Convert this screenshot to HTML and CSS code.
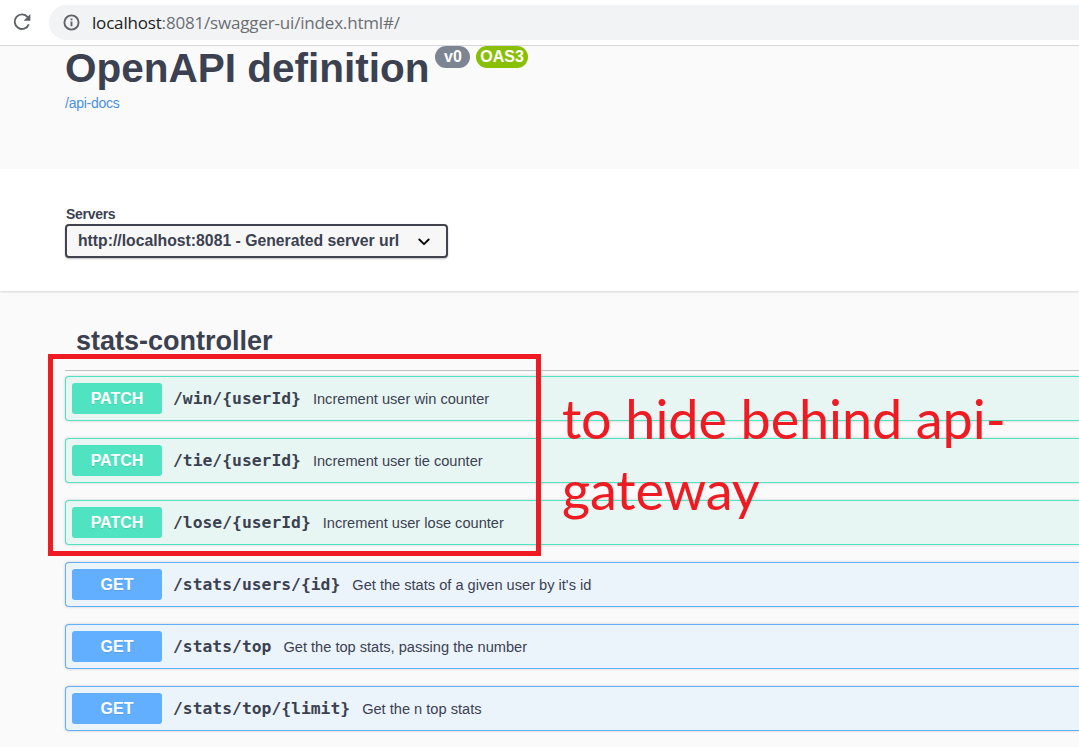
FILE: index.html
```html
<!DOCTYPE html>
<html lang="en">
<head>
<meta charset="utf-8">
<title>OpenAPI definition</title>
<link rel="stylesheet" href="styles.css">
</head>
<body>
<header class="toolbar">
  <svg class="reload" viewBox="0 0 20 20"><path d="M15.7 5.1A7.3 7.3 0 1 0 16.8 12.3" fill="none" stroke="#5f6368" stroke-width="1.9"/><path d="M18.4 2v6.8h-6.8z" fill="#5f6368"/></svg>
  <div class="address">
    <svg class="info-icon" viewBox="0 0 18 18"><circle cx="9" cy="9" r="7.5" fill="none" stroke="#5f6368" stroke-width="2"/><path d="M9 8v5M9 4.8v1.8" stroke="#5f6368" stroke-width="2"/></svg>
    <span class="url"><b>localhost</b>:8081/swagger-ui/index.html#/</span>
  </div>
</header>
<section class="intro">
  <div class="title-row"><h1>OpenAPI definition</h1><span class="badge">v0</span><span class="badge oas">OAS3</span></div>
  <a class="docs">/api-docs</a>
</section>
<section class="servers">
  <label>Servers</label>
  <div class="select"><span>http://localhost:8081 - Generated server url</span><svg viewBox="0 0 12 8"><path d="M1.3 1.5 6 6.2l4.7-4.7" fill="none" stroke="#000" stroke-width="1.8" stroke-linecap="round" stroke-linejoin="round"/></svg></div>
</section>
<main class="operations">
  <h2>stats-controller</h2>
  <div class="op patch"><span class="method">PATCH</span><span class="path">/win/{userId}</span><span class="desc">Increment user win counter</span></div>
  <div class="op patch"><span class="method">PATCH</span><span class="path">/tie/{userId}</span><span class="desc">Increment user tie counter</span></div>
  <div class="op patch"><span class="method">PATCH</span><span class="path">/lose/{userId}</span><span class="desc">Increment user lose counter</span></div>
  <div class="op get"><span class="method">GET</span><span class="path">/stats/users/{id}</span><span class="desc">Get the stats of a given user by it's id</span></div>
  <div class="op get"><span class="method">GET</span><span class="path">/stats/top</span><span class="desc">Get the top stats, passing the number</span></div>
  <div class="op get"><span class="method">GET</span><span class="path">/stats/top/{limit}</span><span class="desc">Get the n top stats</span></div>
</main>
<div class="highlight"></div>
<div class="note"><div>to hide behind api-</div><div>gateway</div></div>
</body>
</html>
```
FILE: styles.css
```css
* { box-sizing: border-box; }
body { margin: 0; width: 1079px; height: 747px; overflow: hidden; position: relative; background: #fafafa; color: #3b4151; font-family: "Liberation Sans", Arial, sans-serif; }
.toolbar { height: 46px; background: #fff; border-bottom: 1px solid #d5d7da; display: flex; padding: 5px 0 5px 12px; }
.reload { width: 20px; height: 20px; margin: 7px 17px 0 0; }
.address { flex: 1; height: 35px; border-radius: 18px 0 0 18px; background: #f1f3f4; display: flex; align-items: center; padding-left: 14px; }
.info-icon { width: 17px; height: 17px; margin-right: 12px; }
.url { font: 17px/24px "Open Sans", sans-serif; color: #6b6f74; letter-spacing: -0.18px; white-space: nowrap; }
.url b { font-weight: 400; color: #202124; }
.intro { height: 123px; padding-left: 65px; }
.title-row { display: flex; height: 48px; }
h1 { margin: 0; font-size: 40.5px; line-height: 44px; white-space: nowrap; }
.badge { height: 22px; margin-left: 6px; padding: 0 8.5px; border-radius: 11px; background: #7d8492; color: #fff; font-size: 16px; font-weight: 700; line-height: 21px; }
.oas { background: #89bf04; padding: 0 4px; }
.docs { display: block; font-size: 14px; letter-spacing: -0.25px; line-height: 19px; color: #4990e2; }
.servers { height: 122px; background: #fff; padding: 37px 0 0 65px; box-shadow: 0 1px 2px rgba(0,0,0,.15); }
.servers label { display: block; height: 18px; padding-left: 1px; font-size: 14px; letter-spacing: -0.3px; font-weight: 700; line-height: 17px; }
.select { width: 383px; height: 34px; border: 2px solid #41444e; border-radius: 4px; background: #f7f7f7; box-shadow: 0 1px 2px rgba(0,0,0,.25); display: flex; align-items: center; padding: 0 16px 0 11px; justify-content: space-between; font-size: 15.75px; font-weight: 700; white-space: nowrap; }
.select svg { width: 12px; height: 8px; margin-top: 2px; }
.operations { padding: 30px 0 0 65px; }
h2 { margin: 0 0 5px; height: 50px; border-bottom: 1px solid #bfc0c4; padding-left: 11px; font-size: 27px; line-height: 40px; }
.op { height: 45px; margin-bottom: 17px; border: 1px solid; border-right: 0; border-radius: 4px 0 0 4px; box-shadow: 0 0 3px rgba(0,0,0,.19); display: flex; align-items: center; padding-left: 6px; white-space: nowrap; }
.patch { border-color: #50e3c2; background: #e8f6f3; }
.get { border-color: #61affe; background: #ebf3fb; }
.method { width: 90px; height: 31px; border-radius: 3px; color: #fff; text-align: center; font-size: 16px; font-weight: 700; line-height: 31px; text-shadow: 0 1px 0 rgba(0,0,0,.1); }
.patch .method { background: #50e3c2; }
.get .method { background: #61affe; }
.path { margin-left: 11px; padding-top: 1px; font: 700 16.35px/24px "DejaVu Sans Mono", monospace; }
.desc { margin-left: 12px; font-size: 14.62px; }
.highlight { position: absolute; left: 48px; top: 354px; width: 493px; height: 202px; border: 5px solid #ef1b23; }
.note { position: absolute; left: 562px; top: 383px; color: #ef1b23; font: 54px/71px Lato, sans-serif; letter-spacing: -0.1px; white-space: nowrap; }
```
